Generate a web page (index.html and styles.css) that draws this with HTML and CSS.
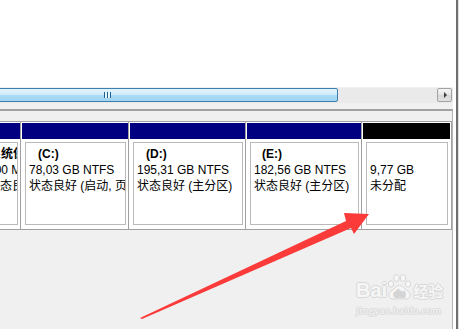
FILE: index.html
```html
<!DOCTYPE html>
<html lang="zh-CN">
<head>
    <meta charset="UTF-8">
    <meta name="viewport" content="width=device-width, initial-scale=1.0">
    <title>磁盘管理</title>
    <link rel="stylesheet" href="styles.css">
</head>
<body>
    <div class="screen">
        <div class="console">
            <div class="volume-list"></div>

            <div class="hscroll">
                <div class="hscroll-thumb"><span class="grip"></span></div>
                <div class="hscroll-track"></div>
                <div class="hscroll-btn"><span class="tri"></span></div>
            </div>

            <div class="spacer"></div>

            <div class="disk-pane">
                <div class="disk-row">
                    <div class="part part-cut">
                        <div class="part-head"></div>
                        <div class="part-body">
                            <div>系统保</div>
                            <div>100 MB</div>
                            <div>状态良</div>
                        </div>
                    </div>
                    <div class="part part-c">
                        <div class="part-head"></div>
                        <div class="part-body">
                            <div class="label">(C:)</div>
                            <div>78,03 GB NTFS</div>
                            <div>状态良好 (启动, 页</div>
                        </div>
                    </div>
                    <div class="part part-d">
                        <div class="part-head"></div>
                        <div class="part-body">
                            <div class="label">(D:)</div>
                            <div>195,31 GB NTFS</div>
                            <div>状态良好 (主分区)</div>
                        </div>
                    </div>
                    <div class="part part-e">
                        <div class="part-head"></div>
                        <div class="part-body">
                            <div class="label label-e">(E:)</div>
                            <div>182,56 GB NTFS</div>
                            <div>状态良好 (主分区)</div>
                        </div>
                    </div>
                    <div class="part part-free">
                        <div class="part-head"></div>
                        <div class="part-body">
                            <div>&nbsp;</div>
                            <div>9,77 GB</div>
                            <div>未分配</div>
                        </div>
                    </div>
                </div>
            </div>
        </div>
        <div class="frame-edge"></div>
        <div class="side"></div>

        <svg class="pointer" width="474" height="329" viewBox="0 0 474 329">
            <polygon points="140,318 346,221 344,213 369,214 354,234 351,228 142,319" fill="#fb3a3a"/>
        </svg>

        <div class="watermark">
            <div class="wm-brand">
                <span class="wm-bai">Bai</span>
                <svg class="wm-paw" width="25" height="27" viewBox="0 0 25 27">
                    <g fill="#f7f7f7" stroke="#d6d6d6" stroke-width="1">
                        <ellipse cx="4" cy="11" rx="2.6" ry="3.2"/>
                        <ellipse cx="9.5" cy="5" rx="2.8" ry="3.4"/>
                        <ellipse cx="16" cy="5" rx="2.8" ry="3.4"/>
                        <ellipse cx="21" cy="11" rx="2.6" ry="3.2"/>
                        <path d="M12.5 12.5 C 16 12.5, 17 16, 21 18 C 25 21, 23 26.5, 18 26 C 15 25.7, 10 25.7, 7 26 C 2 26.5, 0 21, 4 18 C 8 16, 9 12.5, 12.5 12.5 Z"/>
                    </g>
                    <text x="12.5" y="24" text-anchor="middle" class="wm-du">du</text>
                </svg>
                <span class="wm-jy">经验</span>
            </div>
            <div class="wm-url">jingyan.baidu.com</div>
        </div>
    </div>
</body>
</html>
```

FILE: styles.css
```css
body {
    margin: 0;
    padding: 0;
    font-family: "Liberation Sans", "Noto Sans CJK SC", sans-serif;
    background: #fff;
}

.screen {
    position: relative;
    display: flex;
    width: 474px;
    height: 329px;
    overflow: hidden;
}

.console {
    width: 456px;
    flex: none;
    display: flex;
    flex-direction: column;
    background: #fff;
}

.frame-edge {
    width: 2px;
    flex: none;
    background: #6f6f6f;
}

.side {
    flex: 1;
    background: #fff;
    border-left: 1px solid #e2e2e2;
}

.volume-list {
    height: 87px;
    background: #fff;
}

/* horizontal scrollbar */
.hscroll {
    width: 453px;
    height: 16px;
    display: flex;
    background: #eaeaea;
    border-top: 1px solid #f2f2f2;
    box-sizing: border-box;
}

.hscroll-thumb {
    flex: none;
    width: 368px;
    height: 14px;
    margin-left: -30px;
    box-sizing: border-box;
    border: 1px solid #3c7fb1;
    border-radius: 2px;
    background: linear-gradient(#e3f4fc 0%, #d0ecfa 45%, #a9daf5 55%, #a2d5f2 100%);
    display: flex;
    align-items: center;
    padding-left: 133px;
}

.grip {
    width: 7px;
    height: 6px;
    background: repeating-linear-gradient(90deg, #1d5f92 0 1px, #e7f5fc 1px 3px);
}

.hscroll-track {
    flex: 1;
}

.hscroll-btn {
    flex: none;
    width: 15px;
    height: 14px;
    margin-right: 1px;
    box-sizing: border-box;
    border: 1px solid #a3a3a3;
    border-radius: 2px;
    background: linear-gradient(#f6f6f6, #e3e3e3 50%, #d7d7d7 51%, #e2e2e2);
    display: flex;
    align-items: center;
    justify-content: center;
}

.tri {
    width: 0;
    height: 0;
    margin-left: 2px;
    border-top: 3px solid transparent;
    border-bottom: 3px solid transparent;
    border-left: 3px solid #3c3c3c;
}

.spacer {
    height: 6px;
    width: 453px;
    background: #f0f0f0;
}

/* graphical disk view */
.disk-pane {
    flex: 1;
    width: 452px;
    background: #f0f0f0;
    border-top: 2px solid #a2a2a2;
    border-right: 1px solid #b4b4b4;
    padding-top: 10px;
}

.disk-row {
    display: flex;
}

.part {
    flex: none;
    background: #fff;
    border: 1px solid #a0a0a0;
    border-right: 0;
    padding: 1px 0 0 1px;
}

.part:last-child {
    border-right: 1px solid #a0a0a0;
    padding-right: 1px;
}

.part-head {
    height: 16px;
    background: #000080;
}

.part-body {
    height: 78px;
    margin: 3px 2px 4px 3px;
    padding: 3px 0 0 3px;
    box-sizing: content-box;
    border: 1px solid #bababa;
    overflow: hidden;
    white-space: nowrap;
    font-size: 12px;
    line-height: 16px;
    color: #000;
}

.label {
    font-weight: bold;
    padding-left: 9px;
}

.label-e {
    padding-left: 8px;
}

.part-cut {
    width: 39px;
    margin-left: -21px;
}

.part-cut .part-body div:first-child {
    font-weight: bold;
    margin-left: 1px;
}

.part-c {
    width: 106px;
}

.part-d {
    width: 115px;
}

.part-e {
    width: 114px;
}

.part-free {
    width: 87px;
}

.part-free .part-head {
    background: #000;
}

/* overlays */
.pointer {
    position: absolute;
    left: 0;
    top: 0;
    pointer-events: none;
}

.watermark {
    position: absolute;
    left: 356px;
    top: 273px;
    color: #f6f6f6;
    text-shadow: 1px 0 #d8d8d8, -1px 0 #d8d8d8, 0 1px #d8d8d8, 0 -1px #d8d8d8;
}

.wm-brand {
    display: flex;
    align-items: flex-end;
    height: 28px;
}

.wm-bai {
    font-family: "Liberation Sans", sans-serif;
    font-weight: bold;
    font-size: 20px;
    line-height: 22px;
}

.wm-paw {
    margin: 0 0 1px 0;
}

.wm-du {
    font-family: "Liberation Sans", sans-serif;
    font-weight: bold;
    font-size: 9px;
    fill: #f7f7f7;
    stroke: #d2d2d2;
    stroke-width: 0.6;
}

.wm-jy {
    font-family: "Noto Sans CJK SC", sans-serif;
    font-weight: bold;
    font-size: 15px;
    line-height: 20px;
    margin-left: 1px;
}

.wm-url {
    font-family: "Liberation Serif", serif;
    font-size: 11px;
    line-height: 12px;
    margin-top: 3px;
    letter-spacing: 0.2px;
}
```
